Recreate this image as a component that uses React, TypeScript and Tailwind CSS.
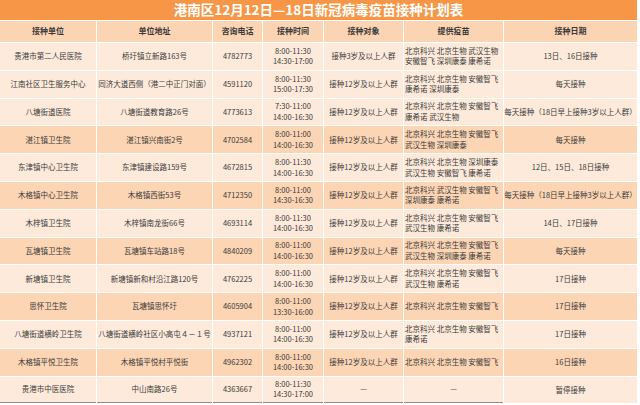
import React from "react";

type Row = {
  unit: string;
  addr: string;
  tel: string;
  time: [string, string];
  target: string;
  vaccines: string[];
  date: string;
};

const HEADERS = ["接种单位", "单位地址", "咨询电话", "接种时间", "接种对象", "提供疫苗", "接种日期"];

const ROWS: Row[] = [
  { unit: "贵港市第二人民医院", addr: "桥圩镇立新路163号", tel: "4782773", time: ["8:00-11:30", "14:30-17:00"], target: "接种3岁及以上人群", vaccines: ["北京科兴 北京生物 武汉生物", "安徽智飞 深圳康泰 康希诺"], date: "13日、16日接种" },
  { unit: "江南社区卫生服务中心", addr: "同济大道西侧（港二中正门对面）", tel: "4591120", time: ["8:00-11:30", "15:00-17:30"], target: "接种12岁及以上人群", vaccines: ["北京科兴 北京生物 安徽智飞", "康希诺 深圳康泰"], date: "每天接种" },
  { unit: "八塘街道医院", addr: "八塘街道教育路26号", tel: "4773613", time: ["7:30-11:00", "14:00-16:30"], target: "接种12岁及以上人群", vaccines: ["北京科兴 北京生物 安徽智飞", "康希诺 武汉生物"], date: "每天接种（18日早上接种3岁以上人群）" },
  { unit: "湛江镇卫生院", addr: "湛江镇兴南街2号", tel: "4702584", time: ["8:00-11:00", "14:00-16:30"], target: "接种12岁及以上人群", vaccines: ["北京科兴 北京生物 安徽智飞", "武汉生物 深圳康泰"], date: "每天接种" },
  { unit: "东津镇中心卫生院", addr: "东津镇建设路159号", tel: "4672815", time: ["8:00-11:30", "14:00-16:30"], target: "接种12岁及以上人群", vaccines: ["北京科兴 北京生物 深圳康泰", "武汉生物 安徽智飞 康希诺"], date: "12日、15日、18日接种" },
  { unit: "木格镇中心卫生院", addr: "木格镇西街53号", tel: "4712350", time: ["8:00-11:00", "14:30-16:30"], target: "接种12岁及以上人群", vaccines: ["北京科兴 武汉生物 安徽智飞", "深圳康泰 康希诺"], date: "每天接种（18日早上接种3岁以上人群）" },
  { unit: "木梓镇卫生院", addr: "木梓镇南龙街66号", tel: "4693114", time: ["8:00-11:30", "14:00-16:30"], target: "接种12岁及以上人群", vaccines: ["北京科兴 北京生物 安徽智飞", "武汉生物 康希诺"], date: "14日、17日接种" },
  { unit: "瓦塘镇卫生院", addr: "瓦塘镇车站路18号", tel: "4840209", time: ["8:00-11:00", "14:00-16:30"], target: "接种12岁及以上人群", vaccines: ["北京科兴 北京生物 安徽智飞", "武汉生物 深圳康泰 康希诺"], date: "每天接种" },
  { unit: "新塘镇卫生院", addr: "新塘镇新和村沿江路120号", tel: "4762225", time: ["8:00-11:00", "14:00-16:30"], target: "接种12岁及以上人群", vaccines: ["北京科兴 北京生物 安徽智飞", "武汉生物 康希诺"], date: "17日接种" },
  { unit: "思怀卫生院", addr: "瓦塘镇思怀圩", tel: "4605904", time: ["8:00-11:00", "13:30-16:00"], target: "接种12岁及以上人群", vaccines: ["北京科兴 北京生物 安徽智飞"], date: "17日接种" },
  { unit: "八塘街道横岭卫生院", addr: "八塘街道横岭社区小高屯４－１号", tel: "4937121", time: ["8:00-11:00", "14:00-16:30"], target: "接种12岁及以上人群", vaccines: ["北京科兴 北京生物 安徽智飞", "康希诺"], date: "17日接种" },
  { unit: "木格镇平悦卫生院", addr: "木格镇平悦村平悦街", tel: "4962302", time: ["8:00-11:00", "14:00-16:30"], target: "接种12岁及以上人群", vaccines: ["北京科兴 北京生物 安徽智飞"], date: "16日接种" },
  { unit: "贵港市中医医院", addr: "中山南路26号", tel: "4363667", time: ["8:00-11:30", "14:30-17:00"], target: "—", vaccines: ["—"], date: "暂停接种" },
];

// rows 1-3 light, then alternating
const isDark = (i: number) => i >= 3 && i % 2 === 1;

export default function App() {
  return (
    <div
      className="w-[640px] h-[405px] bg-white overflow-hidden text-[#3a3a3a]"
      style={{ fontFamily: '"Noto Sans CJK SC", "Noto Sans", sans-serif' }}
    >
      <div className="w-[637px]">
        <div className="h-[21px] bg-[#f79646] flex items-center justify-center text-white font-bold text-[13.5px] leading-none border-b border-white">
          港南区12月12日—18日新冠病毒疫苗接种计划表
        </div>
        <div className="grid grid-cols-[96px_115px_49px_60px_79px_99px_133px] grid-rows-[21px_repeat(13,26.8px)] gap-px bg-white text-[7.5px] leading-[10.5px]">
          {HEADERS.map((h) => (
            <div key={h} className="bg-[#fbd4b4] flex items-center justify-center font-bold text-[8px]">
              {h}
            </div>
          ))}
          {ROWS.map((r, i) => {
            const bg = isDark(i) ? "bg-[#fcd5b4]" : "bg-[#fdeadb]";
            const last = i === ROWS.length - 1 ? "border-b border-[#8c8c8c]" : "";
            const cell = `${bg} ${last} flex items-center justify-center text-center whitespace-nowrap`;
            return (
              <React.Fragment key={i}>
                <div className={cell}>{r.unit}</div>
                <div className={cell}>{r.addr}</div>
                <div className={cell}>{r.tel}</div>
                <div className={`${cell} flex-col`}>
                  <span>{r.time[0]}</span>
                  <span>{r.time[1]}</span>
                </div>
                <div className={cell}>{r.target}</div>
                <div className={`${bg} ${last} flex flex-col justify-center whitespace-nowrap ${r.vaccines[0] === "—" ? "items-center" : "items-start pl-[1px]"}`}>
                  {r.vaccines.map((v) => (
                    <span key={v}>{v}</span>
                  ))}
                </div>
                <div className={`${bg} flex items-center justify-center text-center whitespace-nowrap`}>{r.date}</div>
              </React.Fragment>
            );
          })}
        </div>
      </div>
    </div>
  );
}
